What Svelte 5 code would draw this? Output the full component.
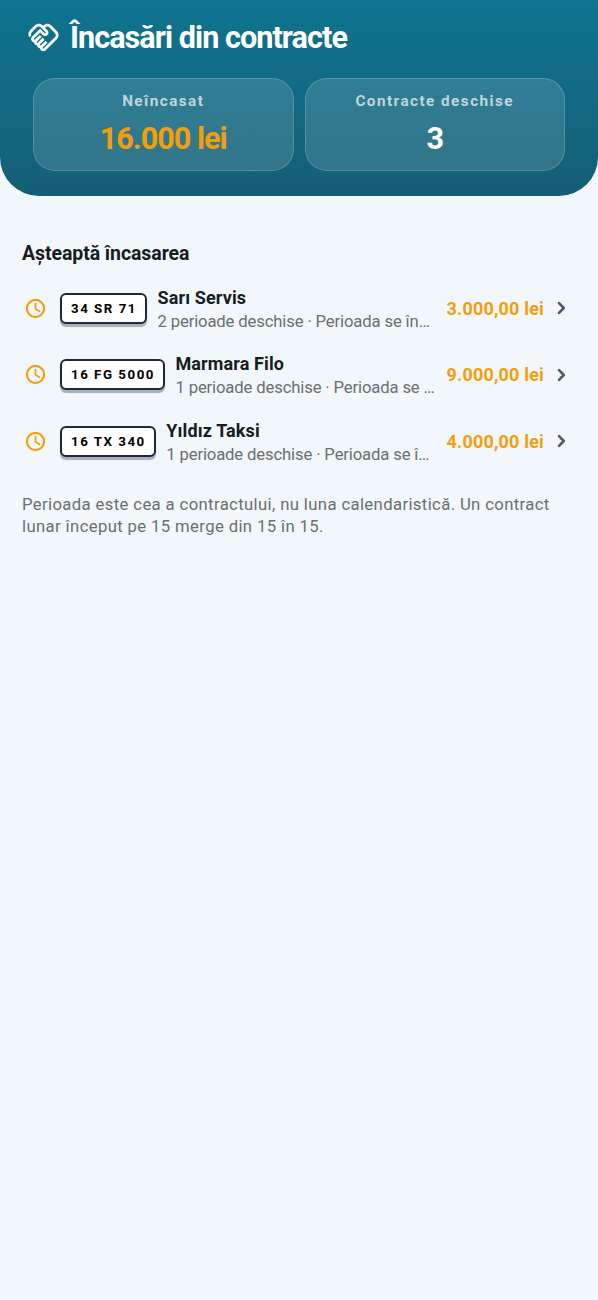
<script lang="ts">
  interface Contract {
    plate: string;
    name: string;
    periods: number;
    amount: string;
  }

  const stats = [
    { label: 'Neîncasat', value: '16.000 lei', warn: true },
    { label: 'Contracte deschise', value: '3', warn: false },
  ];

  const contracts: Contract[] = [
    { plate: '34 SR 71', name: 'Sarı Servis', periods: 2, amount: '3.000,00 lei' },
    { plate: '16 FG 5000', name: 'Marmara Filo', periods: 1, amount: '9.000,00 lei' },
    { plate: '16 TX 340', name: 'Yıldız Taksi', periods: 1, amount: '4.000,00 lei' },
  ];
</script>

<div class="screen">
  <header class="header">
    <div class="title-row">
      <svg class="title-icon" viewBox="0 0 24 24" fill="currentColor">
        <path d="M12.22 19.85c-.18.18-.5.21-.71 0-.18-.18-.21-.5 0-.71l3.39-3.39-1.41-1.41-3.39 3.39c-.19.2-.51.19-.71 0-.21-.21-.18-.53 0-.71l3.39-3.39-1.41-1.41-3.39 3.39c-.18.18-.5.21-.71 0-.19-.19-.19-.51 0-.71l3.39-3.39-1.42-1.41-3.39 3.39c-.18.18-.5.21-.71 0-.19-.2-.19-.51 0-.71L9.52 8.4l1.87 1.86c.95.95 2.59.94 3.54 0 .98-.98.98-2.56 0-3.54l-1.86-1.86.28-.28c.78-.78 2.05-.78 2.83 0l4.24 4.24c.78.78.78 2.05 0 2.83l-8.2 8.2zm9.61-6.78c1.56-1.56 1.56-4.09 0-5.66l-4.24-4.24c-1.56-1.56-4.09-1.56-5.66 0l-.28.28-.28-.28c-1.56-1.56-4.09-1.56-5.66 0L2.17 6.71C.75 8.13.62 10.34 1.77 11.9l1.45-1.45c-.39-.75-.26-1.7.37-2.33l3.54-3.54c.78-.78 2.05-.78 2.83 0l3.56 3.56c.18.18.21.5 0 .71-.21.21-.53.18-.71 0L9.52 5.57l-5.8 5.79c-.98.97-.98 2.56 0 3.54.39.39.89.63 1.42.7.07.52.3 1.02.7 1.42.4.4.9.63 1.42.7.07.52.3 1.02.7 1.42.4.4.9.63 1.42.7.07.54.31 1.03.7 1.42.47.47 1.1.73 1.77.73.67 0 1.3-.26 1.77-.73l8.21-8.19z" />
      </svg>
      <h1>Încasări din contracte</h1>
    </div>
    <div class="stats">
      {#each stats as stat}
        <div class="stat">
          <div class="stat-label">{stat.label}</div>
          <div class="stat-value" class:warn={stat.warn}>{stat.value}</div>
        </div>
      {/each}
    </div>
  </header>

  <main class="content">
    <h2>Așteaptă încasarea</h2>
    {#each contracts as contract}
      <div class="row">
        <svg class="clock" viewBox="0 0 24 24" fill="none" stroke="currentColor" stroke-width="2.2">
          <circle cx="12" cy="12" r="9" />
          <path d="M12 7v5.4l4.2 2.5" stroke-width="1.8" stroke-linecap="round" stroke-linejoin="round" />
        </svg>
        <span class="plate">{contract.plate}</span>
        <div class="info">
          <div class="name">{contract.name}</div>
          <div class="detail">{contract.periods} perioade deschise · Perioada se încheie</div>
        </div>
        <span class="amount">{contract.amount}</span>
        <svg class="chevron" viewBox="0 0 24 24" fill="none" stroke="currentColor" stroke-width="2.6" stroke-linecap="round" stroke-linejoin="round">
          <path d="M10 7.2 14.8 12 10 16.8" />
        </svg>
      </div>
    {/each}
    <p class="note">
      Perioada este cea a contractului, nu luna calendaristică. Un contract lunar început pe 15 merge din 15 în 15.
    </p>
  </main>
</div>

<style>
  :global(body) {
    margin: 0;
    background: #f1f7fb;
  }

  .screen {
    min-height: 1300px;
    background: #f1f7fb;
    color: #171c1f;
    font-family: Roboto, 'Noto Sans', sans-serif;
  }

  .header {
    box-sizing: border-box;
    height: 196px;
    padding: 17px 33px 0;
    border-radius: 0 0 39px 39px;
    background: linear-gradient(180deg, #0e7490, #155e75);
    color: #fff;
  }

  .title-row {
    display: flex;
    align-items: center;
    height: 41px;
    margin-left: -6px;
  }

  .title-icon {
    width: 33px;
    height: 33px;
    margin-right: 10px;
  }

  h1 {
    margin: 0;
    font-size: 30.6px;
    line-height: 41px;
    font-weight: 700;
    letter-spacing: -0.96px;
    white-space: nowrap;
  }

  .stats {
    display: flex;
    gap: 11px;
    margin-top: 20px;
  }

  .stat {
    box-sizing: border-box;
    flex: 1;
    height: 93px;
    padding-top: 11px;
    border: 1px solid rgba(255, 255, 255, 0.18);
    border-radius: 22px;
    background: rgba(255, 255, 255, 0.13);
    text-align: center;
  }

  .stat-label {
    font-size: 15.3px;
    line-height: 23px;
    font-weight: 700;
    letter-spacing: 1.45px;
    color: rgba(255, 255, 255, 0.7);
  }

  .stat-value {
    margin-top: 6px;
    font-size: 30.6px;
    line-height: 40px;
    font-weight: 700;
    letter-spacing: -1px;
  }

  .stat-value.warn {
    color: #f59e0b;
  }

  .content {
    padding: 44px 22px 0;
  }

  h2 {
    margin: 0 0 8px;
    font-size: 19.5px;
    line-height: 27px;
    font-weight: 700;
    letter-spacing: -0.08px;
  }

  .row {
    display: flex;
    align-items: center;
    height: 66.6px;
    padding: 0 3px 0 2px;
  }

  .clock {
    flex: none;
    width: 23px;
    height: 23px;
    margin-right: 13px;
    color: #f59e0b;
  }

  .plate {
    flex: none;
    box-sizing: border-box;
    height: 31px;
    padding: 0 8px 0 9px;
    border: 2px solid #1e293b;
    border-radius: 6px;
    background: #fff;
    box-shadow: 0 3px 1px rgba(30, 41, 59, 0.35);
    color: #000;
    font-size: 13.3px;
    line-height: 27px;
    font-weight: 700;
    letter-spacing: 1.52px;
  }

  .info {
    flex: 1;
    min-width: 0;
    margin: 3px 9px 0 10.5px;
  }

  .name {
    font-size: 18px;
    line-height: 24px;
    font-weight: 700;
    letter-spacing: 0.12px;
  }

  .detail {
    overflow: hidden;
    color: #6b7073;
    font-size: 16.7px;
    line-height: 24px;
    letter-spacing: -0.15px;
    white-space: nowrap;
    text-overflow: ellipsis;
  }

  .amount {
    color: #f59e0b;
    font-size: 18px;
    line-height: 25px;
    font-weight: 700;
    letter-spacing: 0.18px;
  }

  .chevron {
    flex: none;
    width: 24px;
    height: 24px;
    margin-left: 5px;
    color: #53585c;
  }

  .note {
    margin: 19px 0 0;
    color: #6b7073;
    font-size: 16.7px;
    line-height: 22px;
    letter-spacing: 0.37px;
  }
</style>
